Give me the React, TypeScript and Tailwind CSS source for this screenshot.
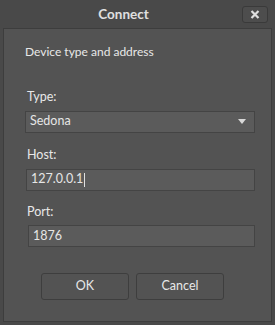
export default function App() {
  return (
    <div className="relative flex h-[325px] w-[275px] flex-col bg-[#494949] font-['Lato',sans-serif] text-[12.5px] text-[#e6e6e6]">
      {/* Title bar */}
      <div className="relative flex h-[28px] shrink-0 items-center justify-center pr-[28px]">
        <span className="text-[13.5px] font-bold text-[#e0e0e0]">Connect</span>
        <button className="absolute right-[7px] top-[6px] flex h-[17px] w-[26px] items-center justify-center rounded-[3px] border border-[#3a3a3a] bg-[#4d4d4d]">
          <svg width="10" height="9" viewBox="0 0 10 9">
            <path d="M1.5 1 L8.5 8 M8.5 1 L1.5 8" stroke="#e0e0e0" strokeWidth="2.2" />
          </svg>
        </button>
      </div>

      {/* Panel */}
      <div className="mx-[3px] mb-[3px] flex flex-1 flex-col border border-[#3d3d3d] bg-[#535353] pl-[21px] pr-[16px]">
        <div className="mt-[14px] text-[12px] text-[#e8e8e8]">Device type and address</div>

        <div className="mt-[27px] pl-[2px] text-[#e8e8e8]">Type:</div>
        <div className="mt-[4px] flex h-[22px] items-center justify-between border border-[#444444] bg-[#5b5b5b] pl-[4px] pr-[8px]">
          <span>Sedona</span>
          <svg width="8" height="5" viewBox="0 0 8 5">
            <path d="M0 0 H8 L4 5 Z" fill="#d8d8d8" />
          </svg>
        </div>

        <div className="mt-[13px] pl-[2px] text-[#e8e8e8]">Host:</div>
        <div className="ml-[1px] mt-[4px] flex h-[22px] items-center border border-[#444444] bg-[#5b5b5b] pl-[4px]">
          <span>127.0.0.1</span>
          <span className="ml-[1px] h-[14px] w-[1px] bg-[#e0e0e0]" />
        </div>

        <div className="mt-[12px] pl-[2px] text-[#e8e8e8]">Port:</div>
        <div className="ml-[3px] mt-[4px] flex h-[22px] items-center border border-[#444444] bg-[#5b5b5b] pl-[4px]">
          <span>1876</span>
        </div>

        <div className="mt-[26px] flex gap-[7px] pl-[16px]">
          <button className="flex h-[27px] w-[88px] items-center justify-center rounded-[3px] border border-[#3e3e3e] bg-[#535353] text-[#e8e8e8]">
            OK
          </button>
          <button className="flex h-[27px] w-[88px] items-center justify-center rounded-[3px] border border-[#3e3e3e] bg-[#535353] text-[#e8e8e8]">
            Cancel
          </button>
        </div>
      </div>
    </div>
  );
}
